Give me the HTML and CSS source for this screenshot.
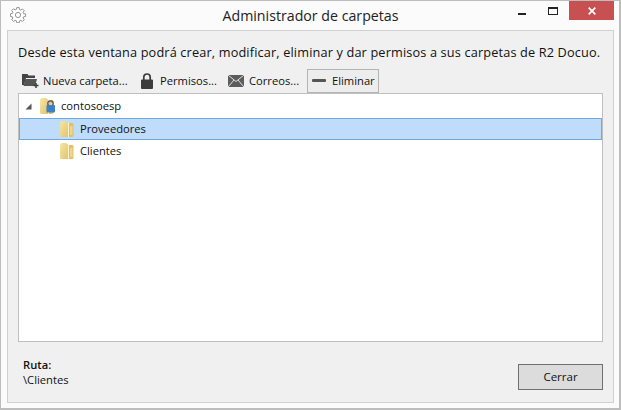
FILE: index.html
```html
<!DOCTYPE html>
<html lang="es">
<head>
<meta charset="utf-8">
<title>Administrador de carpetas</title>
<link rel="stylesheet" href="styles.css">
</head>
<body>
<svg class="defs" width="0" height="0"><defs>
  <linearGradient id="fg" x1="0" y1="0" x2="1" y2="1"><stop offset="0" stop-color="#f5e6a8"/><stop offset="1" stop-color="#e2c46c"/></linearGradient>
  <g id="fld"><path d="M0 2l1-2h5l2 1.500V16H1l-1-1z" fill="url(#fg)"/><path d="M8 2h4.500l1 1v12l-1 1H8z" fill="#dfc068"/><path d="M8 1.500h1V16H8z" fill="#fbf3cf"/><path d="M10 5h2.500v9H10z" fill="#eed68c"/></g>
</defs></svg>
<div class="window">
  <header class="titlebar">
    <svg class="gear" viewBox="0 0 16 16" width="16" height="16"><path d="M6.800.6h2.400l.4 2 1.200.5 1.700-1.100 1.700 1.700-1.100 1.700.5 1.200 2 .4v2.400l-2 .4-.5 1.200 1.100 1.700-1.700 1.700-1.700-1.100-1.200.5-.4 2H6.800l-.4-2-1.200-.5-1.700 1.100-1.700-1.700 1.100-1.700-.5-1.200-2-.4V6.800l2-.4.5-1.200-1.100-1.700 1.700-1.700 1.700 1.100 1.200-.5z" fill="#fff" stroke="#777" stroke-width=".8" stroke-linejoin="round"/><circle cx="8" cy="8" r="2.600" fill="none" stroke="#777" stroke-width=".8"/></svg>
    <h1 class="title">Administrador de carpetas</h1>
    <div class="controls">
      <span class="ctl"><i class="min"></i></span>
      <span class="ctl"><i class="max"></i></span>
      <span class="close"><svg viewBox="0 0 8 8" width="8" height="8"><path d="M.7.7l6.600 6.600M7.300.7L.7 7.300" stroke="#fff" stroke-width="1.700"/></svg></span>
    </div>
  </header>
  <main class="panel">
    <p class="intro">Desde esta ventana podrá crear, modificar, eliminar y dar permisos a sus carpetas de R2 Docuo.</p>
    <div class="toolbar">
      <button class="tool t1">
        <svg viewBox="0 0 17 15" width="17" height="15"><path d="M0 1h5.500l1 1.500H13V5H4L2 12H0z" fill="#444"/><path d="M3.500 6H15l-2 7H1.500z" fill="#555"/><path d="M11.500 12.500h5M14 10v5" stroke="#3c3c3c" stroke-width="1.500"/></svg>
        <span>Nueva carpeta...</span>
      </button>
      <button class="tool t2">
        <svg viewBox="0 0 12 16" width="12" height="16"><path d="M2.800 7V4.200a3.200 3.200 0 0 1 6.400 0V7" fill="none" stroke="#3c3c3c" stroke-width="1.700"/><path d="M1 6.500h10a1 1 0 0 1 1 1V15a1 1 0 0 1-1 1H1a1 1 0 0 1-1-1V7.500a1 1 0 0 1 1-1z" fill="#3c3c3c"/></svg>
        <span>Permisos...</span>
      </button>
      <button class="tool t3">
        <svg viewBox="0 0 16 12" width="16" height="12"><rect width="16" height="12" fill="#5c5c5c"/><path d="M0 0l8 6.500L16 0M0 12l6-7M16 12l-6-7" fill="none" stroke="#eee" stroke-width=".9"/></svg>
        <span>Correos...</span>
      </button>
      <button class="tool t4 hover">
        <i class="dash"></i>
        <span>Eliminar</span>
      </button>
    </div>
    <section class="tree">
      <div class="row root">
        <svg class="arrow" viewBox="0 0 7 7" width="7" height="7"><path d="M6.500.5v6h-6z" fill="#555"/></svg>
        <svg class="folder" viewBox="0 0 17 17" width="17" height="17"><use href="#fld"/><circle cx="10.500" cy="5.500" r="2.700" fill="none" stroke="#555" stroke-width="1.300"/><rect x="6.500" y="7" width="8.500" height="7.500" rx="1" fill="#3d7fc4"/></svg>
        <span>contosoesp</span>
      </div>
      <div class="row child selected">
        <svg class="folder" viewBox="0 0 14 16" width="14" height="16"><use href="#fld"/></svg>
        <span>Proveedores</span>
      </div>
      <div class="row child">
        <svg class="folder" viewBox="0 0 14 16" width="14" height="16"><use href="#fld"/></svg>
        <span>Clientes</span>
      </div>
    </section>
    <footer class="footer">
      <div class="path"><strong>Ruta:</strong><span>\Clientes</span></div>
      <button class="closebtn">Cerrar</button>
    </footer>
  </main>
</div>
</body>
</html>
```

FILE: styles.css
```css
* { box-sizing: border-box; }
html, body { margin: 0; height: 100%; }
body { width: 621px; height: 410px; overflow: hidden; background: #fff; font-family: "Open Sans", "Noto Sans", sans-serif; color: #111; }
.window { width: 621px; height: 410px; display: flex; flex-direction: column; border: 1px solid #bdbdbd; border-width: 1px 2px 2px 1px; background: #fbfbfb; padding: 0 5px 5px 6px; }
.titlebar { height: 29px; flex: none; display: flex; align-items: flex-start; position: relative; }
.gear { margin: 6px 0 0 3px; flex: none; }
.title { position: absolute; left: 0; right: 0; top: 5px; margin: 0; text-align: center; font-size: 14.200px; font-weight: 400; line-height: 20px; color: #222; }
.controls { position: absolute; right: 0; top: 0; display: flex; height: 19px; }
.ctl { width: 30px; display: flex; align-items: center; justify-content: center; position: relative; }
.min { width: 8px; height: 2px; background: #222; margin-top: 7px; margin-right: 4px; }
.max { width: 10px; height: 8px; border: 1px solid #222; border-top-width: 2px; margin-right: 2px; }
.close { width: 45px; background: #c75050; display: flex; align-items: center; justify-content: center; }
.panel { flex: 1; background: #f0f0f0; border: 1px solid #d0d0d0; display: flex; flex-direction: column; padding: 0 10px; min-height: 0; }
.intro { margin: 12px 0 0; font-size: 12.730px; letter-spacing: .15px; line-height: 18px; white-space: nowrap; color: #111; }
.toolbar { display: flex; align-items: center; margin-top: 7px; height: 25px; }
.tool { height: 24px; border: 1px solid transparent; background: none; padding: 0; font: inherit; font-size: 11.200px; color: #111; display: flex; align-items: center; white-space: nowrap; }
.tool span { display: block; }
.t1 { width: 117px; padding-left: 3px; gap: 4px; }
.t2 { width: 88px; padding-left: 5px; gap: 7px; }
.t3 { width: 84px; padding-left: 4px; gap: 5px; }
.t4 { width: 72px; padding-left: 4px; gap: 6px; }
.hover { background: #ededed; border-color: #b5b5b5; }
.dash { width: 14px; height: 3px; border-radius: 1px; background: #555; flex: none; }
.tree { height: 249px; flex: none; background: #fff; border: 1px solid #bfbfbf; padding-top: 1px; }
.row { height: 22px; display: flex; align-items: center; font-size: 11.200px; white-space: nowrap; }
.row span { padding-bottom: 2px; }
.root { padding-left: 6px; height: 23px; padding-bottom: 1px; }
.arrow { margin-right: 8px; margin-top: 1px; }
.root .folder { margin-right: 4px; }
.child { padding-left: 41px; }
.child .folder { margin-right: 6px; }
.selected { background: #bfdcfb; border: 1px solid #6ea9e4; padding-left: 40px; }
.footer { flex: 1; display: flex; justify-content: space-between; align-items: flex-end; padding-bottom: 12px; }
.path { display: flex; flex-direction: column; font-size: 11.200px; line-height: 15px; padding-left: 5px; padding-bottom: 3px; }
.path strong { font-weight: 600; }
.closebtn { width: 85px; height: 26px; background: #dcdcdc; border: 1px solid #707070; padding: 0 0 2px; font: inherit; font-size: 11.500px; color: #111; }
.defs { position: absolute; }
```
